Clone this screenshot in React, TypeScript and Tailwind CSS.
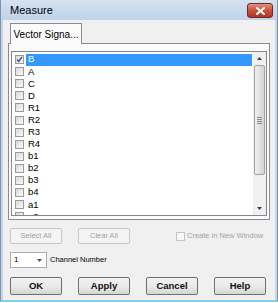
import React from 'react';

const items = ['B', 'A', 'C', 'D', 'R1', 'R2', 'R3', 'R4', 'b1', 'b2', 'b3', 'b4', 'a1', 'a2'];

const font = "font-['Liberation_Sans',Arial,sans-serif]";

const CheckBox = ({ checked = false, disabled = false }: { checked?: boolean; disabled?: boolean }) => (
  <span
    className={`flex h-[9px] w-[9px] shrink-0 items-center justify-center border ${
      disabled ? 'border-[#c4c4c4] bg-[#f6f6f6]' : 'border-[#9a9a9a] bg-gradient-to-br from-[#d8d8d8] to-[#fafafa]'
    }`}
  >
    {checked && (
      <svg width="7" height="7" viewBox="0 0 7 7">
        <path d="M1 3.5 L2.8 5.5 L6 1" fill="none" stroke="#40508a" strokeWidth="1.3" />
      </svg>
    )}
  </span>
);

const DlgButton = ({ label, disabled = false }: { label: string; disabled?: boolean }) =>
  disabled ? (
    <div className="flex h-[16px] w-[52px] items-center justify-center rounded-[2px] border border-[#c6c8ca] bg-[#f4f4f4] text-[7.5px] text-[#a3a3a3]">
      {label}
    </div>
  ) : (
    <div className="flex h-[18px] w-[52px] items-center justify-center rounded-[2px] border border-[#707070] bg-gradient-to-b from-[#f2f2f2] via-[#ebebeb] to-[#d6d6d6] text-[9.5px] font-bold text-[#111]">
      {label}
    </div>
  );

export default function App() {
  return (
    <div className={`h-[303px] w-[278px] bg-white ${font}`}>
      <div className="flex h-[302px] flex-col border-x border-b-2 border-x-[#7f93ab] border-b-[#86cdef] bg-[#c2d5eb]">
        {/* title bar */}
        <div className="flex h-[20px] shrink-0 items-start bg-gradient-to-b from-[#d5e2f1] to-[#bfd3ea]">
          <span className="ml-[9px] mt-[4px] text-[11px] leading-[12px] text-black">Measure</span>
          <div className="ml-auto mr-[4px] mt-[3px] flex h-[15px] w-[26px] items-center justify-center rounded-[3px] border border-[#6f2a22] bg-gradient-to-b from-[#e0917f] via-[#c9503d] to-[#b23424]">
            <svg width="9" height="8" viewBox="0 0 9 8">
              <path d="M1 1 L8 7 M8 1 L1 7" stroke="#fff" strokeWidth="2" strokeLinecap="square" />
            </svg>
          </div>
        </div>

        {/* client area */}
        <div className="mx-[2px] flex flex-1 flex-col bg-[#f0f0f0] px-[5px] pt-[3px]">
          {/* tab strip */}
          <div className="flex h-[20px] pl-[2px]">
            <div className="relative z-10 -mb-px flex h-[21px] w-[72px] items-center justify-center border border-b-0 border-[#898c95] bg-[#fbfbfb] text-[10px] text-black">
              Vector Signa...
            </div>
          </div>

          {/* tab page */}
          <div className="flex h-[177px] w-[262px] flex-col border border-[#898c95] bg-[#fbfbfb] px-[2px] pb-[3px] pt-[7px]">
            <div className="flex h-[165px] border border-[#828790] bg-white">
              <div className="flex flex-1 flex-col overflow-hidden pt-[1.5px]">
                {items.map((it, i) => (
                  <div key={it} className="flex h-[12.1px] shrink-0 items-center">
                    <div className="ml-[3px] mr-[2px]">
                      <CheckBox checked={i === 0} />
                    </div>
                    <div
                      className={`mr-px flex h-[12px] flex-1 items-center pl-[2px] text-[9.5px] ${
                        i === 0 ? 'bg-[#3399ff] text-white' : 'text-black'
                      }`}
                    >
                      {it}
                    </div>
                  </div>
                ))}
              </div>
              {/* scrollbar */}
              <div className="flex w-[13px] flex-col bg-[#f0f0f0] py-px">
                <div className="flex h-[11px] items-center justify-center">
                  <svg width="5" height="3" viewBox="0 0 5 3">
                    <path d="M0 3 L2.5 0 L5 3 Z" fill="#404040" />
                  </svg>
                </div>
                <div className="mx-px mt-px flex h-[110px] flex-col items-center justify-center gap-px rounded-[2px] border border-[#a3a3a3] bg-gradient-to-r from-[#f0f0f0] to-[#d4d4d4]">
                  <span className="h-px w-[5px] bg-[#8a8a8a]" />
                  <span className="h-px w-[5px] bg-[#8a8a8a]" />
                  <span className="h-px w-[5px] bg-[#8a8a8a]" />
                  <span className="h-px w-[5px] bg-[#8a8a8a]" />
                </div>
                <div className="flex-1" />
                <div className="flex h-[11px] items-center justify-center">
                  <svg width="5" height="3" viewBox="0 0 5 3">
                    <path d="M0 0 L2.5 3 L5 0 Z" fill="#404040" />
                  </svg>
                </div>
              </div>
            </div>
          </div>

          {/* select/clear row */}
          <div className="mt-[8px] flex items-center pl-[2px]">
            <DlgButton label="Select All" disabled />
            <div className="ml-[16px]">
              <DlgButton label="Clear All" disabled />
            </div>
            <div className="ml-[46px] flex items-center gap-[2px]">
              <CheckBox disabled />
              <span className="text-[7.5px] text-[#a3a3a3]">Create in New Window</span>
            </div>
          </div>

          {/* channel number */}
          <div className="mt-[8px] flex items-center pl-[2px]">
            <div className="flex h-[16px] w-[37px] items-center border border-[#abadb3] bg-white pl-[3px] pr-[4px]">
              <span className="flex-1 text-[8px] text-black">1</span>
              <svg width="5" height="3" viewBox="0 0 5 3">
                <path d="M0 0 L2.5 3 L5 0 Z" fill="#505050" />
              </svg>
            </div>
            <span className="ml-[3px] text-[7.5px] text-black">Channel Number</span>
          </div>

          {/* dialog buttons */}
          <div className="mt-[9px] flex gap-[16px] pl-[2px]">
            <DlgButton label="OK" />
            <DlgButton label="Apply" />
            <DlgButton label="Cancel" />
            <DlgButton label="Help" />
          </div>
        </div>
      </div>
    </div>
  );
}
